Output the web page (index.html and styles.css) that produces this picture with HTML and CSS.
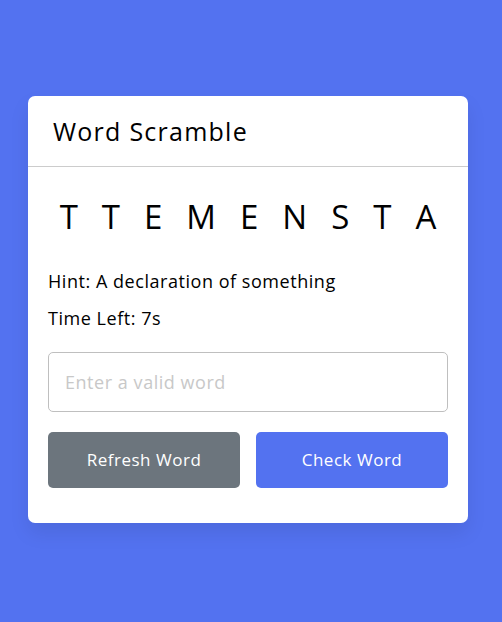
FILE: index.html
```html
<!DOCTYPE html>
<html lang="en">
<head>
<meta charset="utf-8">
<title>Word Scramble</title>
<link rel="stylesheet" href="styles.css">
</head>
<body>
<div class="container">
  <h2 class="title">Word Scramble</h2>
  <div class="content">
    <p class="word">ttemensta</p>
    <div class="details">
      <p class="hint">Hint: <span>A declaration of something</span></p>
      <p class="time">Time Left: <span><b>7</b>s</span></p>
    </div>
    <input class="field" type="text" spellcheck="false" placeholder="Enter a valid word" maxlength="9">
    <div class="buttons">
      <button class="btn refresh-word">Refresh Word</button>
      <button class="btn check-word">Check Word</button>
    </div>
  </div>
</div>
</body>
</html>
```
FILE: styles.css
```css
* {
  margin: 0;
  padding: 0;
  box-sizing: border-box;
  font-family: "Open Sans", sans-serif;
}
body {
  display: flex;
  padding: 0 16px 3px 10px;
  min-height: 100vh;
  align-items: center;
  justify-content: center;
  background: #5372F0;
}
.container {
  width: 440px;
  border-radius: 7px;
  background: #fff;
  box-shadow: 0 10px 20px rgba(0,0,0,0.08);
}
.title {
  font-size: 25px;
  font-weight: 500;
  line-height: 38px;
  letter-spacing: 0.05em;
  padding: 16px 25px;
  border-bottom: 1px solid #ccc;
}
.content {
  margin: 25px 20px 35px;
}
.word {
  user-select: none;
  font-size: 33px;
  font-weight: 500;
  line-height: 1.5;
  text-align: center;
  letter-spacing: 24px;
  margin-right: -24px;
  text-transform: uppercase;
}
.details {
  margin: 26px 0 20px;
}
.details p {
  font-size: 18px;
  line-height: 1.5;
  letter-spacing: 0.03em;
  margin-bottom: 10px;
}
.details b {
  font-weight: 400;
}
.field {
  width: 100%;
  height: 60px;
  outline: none;
  padding: 0 16px;
  border-radius: 5px;
  border: 1px solid #bfbfbf;
  font-size: 18px;
  letter-spacing: 0.03em;
}
.field::placeholder {
  color: #c8c8c8;
}
.buttons {
  display: flex;
  margin-top: 20px;
  justify-content: space-between;
}
.btn {
  border: none;
  outline: none;
  color: #fff;
  padding: 16px 0;
  font-size: 17px;
  line-height: 24px;
  letter-spacing: 0.03em;
  border-radius: 5px;
  width: calc(100% / 2 - 8px);
}
.refresh-word {
  background: #6C757D;
}
.check-word {
  background: #5372F0;
}
```
